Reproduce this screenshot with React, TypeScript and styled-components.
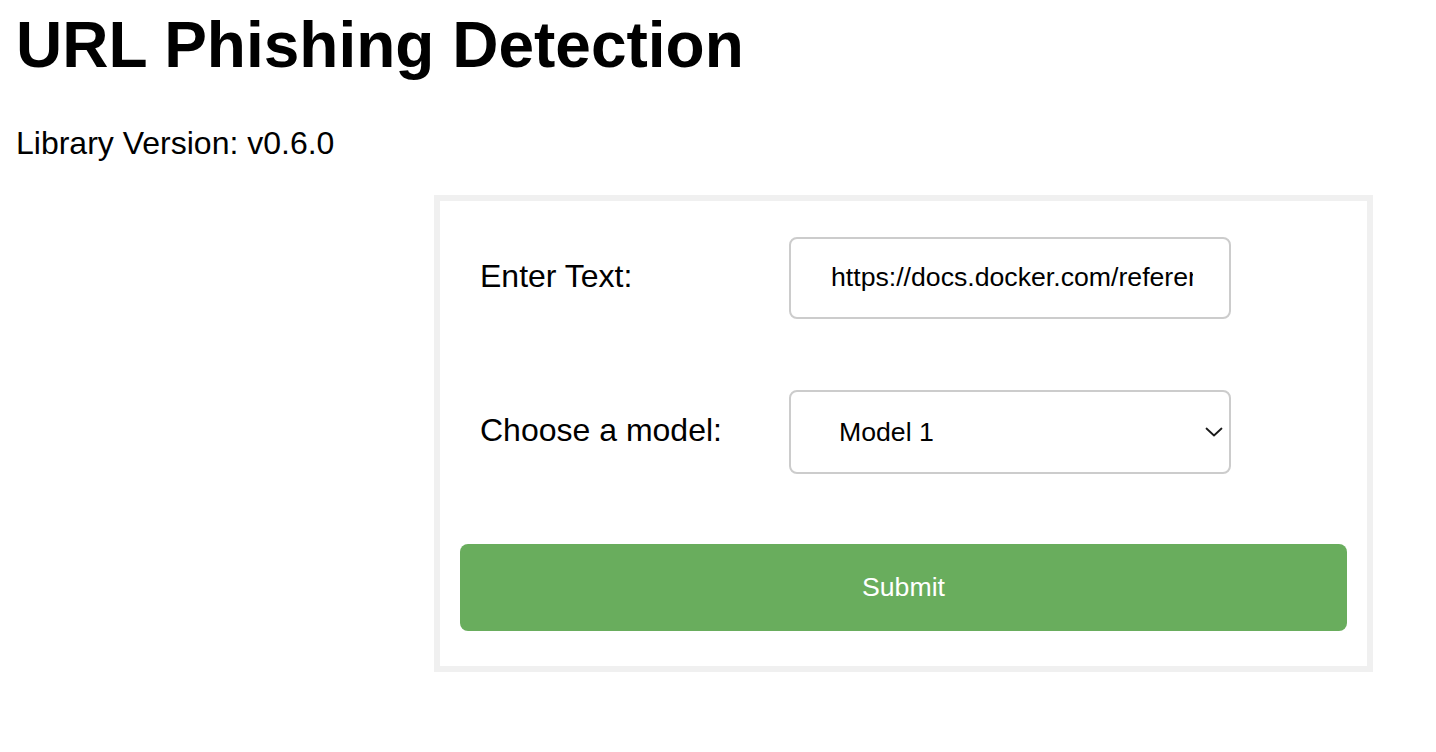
import React, { useState } from "react";
import styled, { createGlobalStyle } from "styled-components";

const GlobalStyle = createGlobalStyle`
  html, body {
    margin: 0;
    padding: 0;
    background: #ffffff;
  }
  body {
    font-family: "Liberation Sans", Arial, sans-serif;
    color: #000000;
  }
`;

const Page = styled.div`
  padding: 8px 16px 0 16px;
`;

const Title = styled.h1`
  margin: 0 0 42.88px 0;
  font-size: 64px;
  font-weight: 700;
  line-height: normal;
`;

const Version = styled.p`
  margin: 0 0 33px 0;
  font-size: 32px;
  line-height: normal;
`;

const Panel = styled.form`
  box-sizing: border-box;
  width: 939px;
  margin-left: 418px;
  border: 6px solid #f0f0f0;
  padding: 36px 20px 35px 20px;
  display: flex;
  flex-direction: column;
`;

const FieldRow = styled.div<{ $gap: number }>`
  display: grid;
  grid-template-columns: 309px 442px;
  align-items: center;
  padding-left: 20px;
  margin-bottom: ${(p) => p.$gap}px;
`;

const Label = styled.label`
  font-size: 32px;
  line-height: normal;
  margin-top: -2px;
`;

const TextInput = styled.input`
  box-sizing: border-box;
  width: 442px;
  height: 82px;
  border: 2px solid #cccccc;
  border-radius: 8px;
  padding: 0 36px 0 40px;
  font-family: "Liberation Sans", Arial, sans-serif;
  font-size: 26.67px;
  color: #000000;
  background: #ffffff;
  outline: none;
`;

const SelectWrap = styled.div`
  position: relative;
  width: 442px;
  height: 84px;
`;

const Select = styled.select`
  box-sizing: border-box;
  width: 442px;
  height: 84px;
  border: 2px solid #cccccc;
  border-radius: 8px;
  padding: 0 40px 0 48px;
  font-family: "Liberation Sans", Arial, sans-serif;
  font-size: 26.67px;
  color: #000000;
  background: #ffffff;
  appearance: none;
  -webkit-appearance: none;
  outline: none;
`;

const Chevron = styled.svg`
  position: absolute;
  right: 8px;
  top: 50%;
  transform: translateY(-50%);
  pointer-events: none;
`;

const SubmitButton = styled.button`
  box-sizing: border-box;
  width: 100%;
  height: 87px;
  border: none;
  border-radius: 8px;
  background: #69ad5d;
  color: #ffffff;
  font-family: "Liberation Sans", Arial, sans-serif;
  font-size: 26.67px;
  cursor: pointer;
`;

export default function App() {
  const [text, setText] = useState("https://docs.docker.com/reference/");
  const [model, setModel] = useState("model1");
  return (
    <>
      <GlobalStyle />
      <Page>
        <Title>URL Phishing Detection</Title>
        <Version>Library Version: v0.6.0</Version>
        <Panel onSubmit={(e) => e.preventDefault()}>
          <FieldRow $gap={71}>
            <Label htmlFor="text">Enter Text:</Label>
            <TextInput
              id="text"
              value={text}
              onChange={(e) => setText(e.target.value)}
            />
          </FieldRow>
          <FieldRow $gap={70}>
            <Label htmlFor="model">Choose a model:</Label>
            <SelectWrap>
              <Select
                id="model"
                value={model}
                onChange={(e) => setModel(e.target.value)}
              >
                <option value="model1">Model 1</option>
                <option value="model2">Model 2</option>
              </Select>
              <Chevron width="18" height="12" viewBox="0 0 18 12">
                <path
                  d="M1.5 2.5 L9 9.5 L16.5 2.5"
                  fill="none"
                  stroke="#1a1a1a"
                  strokeWidth="1.8"
                  strokeLinecap="round"
                  strokeLinejoin="round"
                />
              </Chevron>
            </SelectWrap>
          </FieldRow>
          <SubmitButton type="submit">Submit</SubmitButton>
        </Panel>
      </Page>
    </>
  );
}
